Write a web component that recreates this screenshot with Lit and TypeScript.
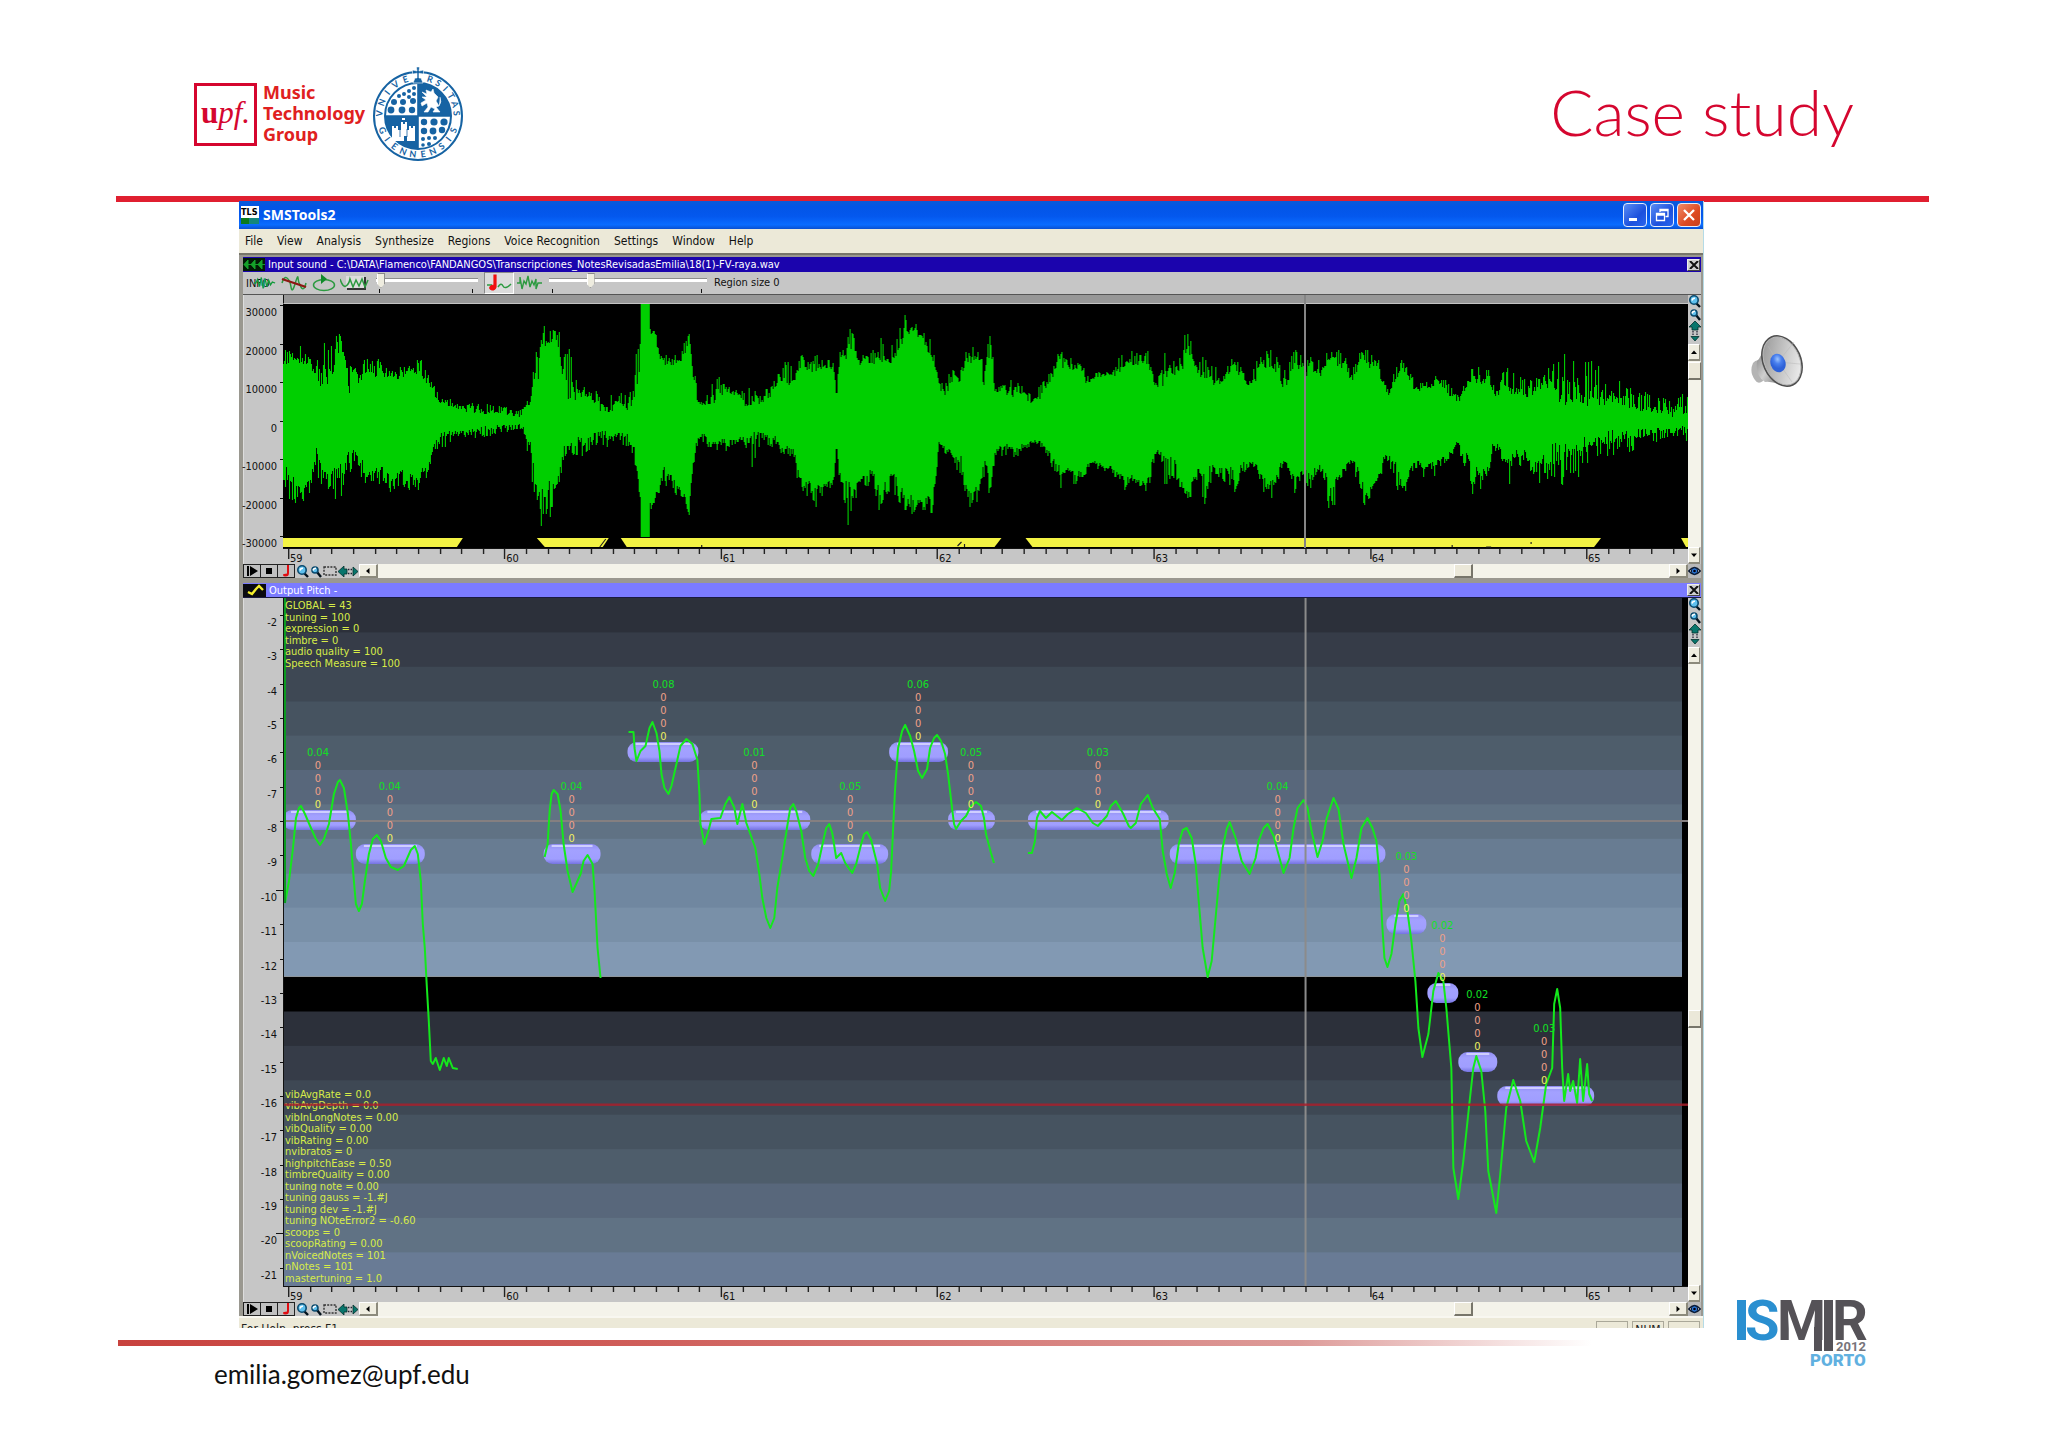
import { LitElement, html, svg, css } from "lit";
import { customElement, property } from "lit/decorators.js";

/* ---------- time axis shared by both panes ---------- */
const X0 = 283;
const W = 1406;
const SECOND = 216.5;
const pct = (x: number) => `${((x - X0) / W) * 100}%`;
const SECONDS = [59, 60, 61, 62, 63, 64, 65].map((s, i) => ({ s, x: 289 + i * SECOND }));

/* ---------- waveform envelope: x, upper body, upper peak, lower body, lower peak ---------- */
const STRIP_A = `112 215 185 550 600 130 205 185 565 630 150 205 170 610 640 165 215 200 580 610 182 260 220 500 560
200 260 150 560 590 215 230 165 560 600 232 190 135 570 675 240 185 160 540 580 252 280 220 505 560 262 235 225 490 520
272 270 240 500 530 285 235 200 540 600 300 250 220 550 570 315 245 210 535 575 330 250 225 560 590 345 245 205 575 610
358 260 235 545 580 372 245 230 570 610 385 240 230 560 585 400 245 208 580 600 410 260 215 530 565 418 270 250 540 565
430 310 285 470 490 445 335 320 445 480 465 345 325 435 460 480 345 325 428 440 500 358 340 425 440 520 362 345 420 440
540 365 345 418 438 560 365 350 412 430 580 368 352 410 425 600 375 362 405 420 615 372 355 410 425 625 350 340 430 470
635 345 315 460 510 642 270 250 540 590 648 230 165 600 660 655 250 200 630 690 662 150 92 640 740 670 155 125 660 720
678 150 118 590 690 688 150 125 600 620 698 165 128 560 640 706 280 150 480 520 712 290 180 470 500 720 310 190 465 480
735 305 270 460 500 750 310 285 460 490 765 320 290 445 470 780 345 310 430 460 800 355 330 440 480 820 345 300 430 455
840 350 320 440 465 855 335 300 470 500 862 280 180 560 600 869 200 150 620 660 870 42 42 742 742 888 42 42 742 742
890 120 100 640 660 900 130 110 620 635 908 190 170 600 620 920 215 190 545 590 930 220 180 555 575 945 210 190 580 610
955 210 190 600 620 965 175 150 630 650 973 140 130 660 685 980 240 200 520 540 990 330 310 450 470 1005 345 340 435 455
1015 330 290 450 470 1030 310 260 465 480 1045 300 280 460 490 1060 305 285 460 490 1075 310 290 450 475
1090 335 305 450 470 1105 330 290 450 530 1125 325 295 435 455 1145 310 285 440 465 1155 290 270 450 485
1165 260 240 470 490 1180 270 210 475 495 1195 270 235 490 520 1205 230 205 560 600 1215 220 190 600 630
1228 240 220 575 605 1240 230 200 610 655 1255 235 205 590 620 1270 225 210 580 600 1280 240 220 560 570
1285 330 320 460 450 1292 200 180 550 580 1300 195 180 590 640 1310 190 115 600 695 1320 150 120 620 680
1330 215 190 580 600 1345 220 200 560 590 1360 210 190 540 570 1373 200 130 620 695 1385 200 170 590 630
1400 215 180 560 590 1415 190 140 580 630 1430 110 75 630 665 1440 120 90 640 680 1450 110 90 620 660
1460 140 110 630 640 1475 160 130 630 670 1485 185 150 640 685 1495 230 210 580 600 1502 290 280 460 470
1515 310 285 470 490 1525 280 240 490 510 1535 270 230 500 520 1548 270 250 510 560 1558 215 190 600 640
1568 210 180 610 650`;
const STRIP_B = `22 200 160 620 650 32 205 180 600 630 42 190 135 590 640 52 300 230 510 540 58 200 150 560 600
64 160 120 600 625 72 300 280 480 500 85 305 290 480 510 100 300 265 470 490 115 310 280 480 500 135 315 290 465 480
150 340 320 455 460 165 315 285 455 470 180 280 260 480 500 195 250 230 520 540 206 190 160 550 605 215 235 210 540 560
232 225 195 550 580 245 235 220 550 575 262 275 250 530 550 280 260 245 515 530 300 255 250 540 555 315 252 240 530 550
325 235 190 550 570 340 225 205 575 600 355 215 185 560 575 370 215 195 575 590 385 215 185 590 610 395 230 190 530 560
402 285 280 490 500 412 300 260 480 490 422 240 175 530 600 432 230 180 520 560 445 250 230 520 560 455 220 190 570 590
463 200 108 600 610 475 180 150 600 630 482 210 180 570 590 492 245 230 540 560 505 250 190 575 640 512 240 210 570 650
522 270 240 530 560 535 280 220 540 560 550 245 225 540 580 568 230 190 560 600 580 265 235 530 560 597 285 275 520 530
610 260 225 520 530 622 220 190 560 590 635 215 180 590 630 650 220 185 580 610 663 280 240 520 540 675 270 240 520 530
688 220 190 570 600 700 230 170 570 610 712 260 230 545 570 725 215 190 570 600 737 250 210 530 555 752 240 215 545 570
765 190 155 620 680 778 215 180 580 620 790 220 190 550 580 808 265 245 510 520 820 240 200 540 580 830 190 175 590 640
840 220 180 600 650 852 215 190 590 620 862 230 190 570 590 872 270 250 510 540 885 310 290 500 510 900 260 240 540 590
912 235 205 590 625 922 240 230 580 600 932 280 260 530 550 945 300 280 515 530 960 290 280 540 570 972 290 270 520 540
985 270 255 530 570 1000 290 270 505 520 1015 315 290 485 500 1030 330 315 455 480 1045 285 265 500 540
1060 270 235 530 605 1075 265 230 550 590 1088 270 225 535 570 1100 300 280 470 490 1110 320 300 460 490
1120 290 255 500 520 1133 290 240 530 580 1150 300 260 490 530 1165 300 250 490 540 1180 305 270 520 540
1192 290 265 530 575 1210 280 250 500 560 1228 290 220 490 575 1243 300 185 500 575 1258 300 210 480 555
1270 290 195 500 560 1283 300 220 480 550 1297 310 230 460 510 1310 300 210 460 490 1325 320 260 450 500
1340 320 270 440 490 1360 320 280 445 485 1385 340 300 440 480 1410 350 310 430 465 1440 355 325 425 450
1470 365 330 425 440 1490 350 305 420 445 1505 350 310 420 450`;

type Row = number[];
const readStrip = (text: string, origin: number, scale: number): Row[] => {
  const n = text.split(/\s+/).map(Number);
  const rows: Row[] = [];
  for (let i = 0; i < n.length; i += 5) {
    rows.push([origin + n[i] / scale, ...n.slice(i + 1, i + 5).map((v) => 290 + v / 3)]);
  }
  return rows;
};
const ENVELOPE = [...readStrip(STRIP_A, 230, 2.119), ...readStrip(STRIP_B, 960, 2.063)];

const wavePath = (() => {
  let seed = 7;
  const rnd = () => {
    seed = (seed * 1103515245 + 12345) % 2147483648;
    return seed / 2147483648;
  };
  const jag = () => (rnd() < 0.3 ? 0.6 + rnd() * 0.6 : (rnd() - 0.55) * 0.9);
  let d = "";
  let k = 0;
  for (let x = X0; x < X0 + W; x++) {
    while (k < ENVELOPE.length - 2 && ENVELOPE[k + 1][0] < x) k++;
    const a = ENVELOPE[k];
    const b = ENVELOPE[k + 1];
    const t = Math.min(1, Math.max(0, (x - a[0]) / (b[0] - a[0])));
    const v = [1, 2, 3, 4].map((i) => a[i] + (b[i] - a[i]) * t);
    const top = Math.round(v[0] + (v[1] - v[0]) * jag());
    const bottom = Math.round(v[2] + (v[3] - v[2]) * jag());
    d += `M${x + 0.5} ${top}V${bottom}`;
  }
  return d;
})();

const VOICED = [
  "283,538 463,538 457,547 283,547",
  "537,538 609,538 603,547 545,547",
  "621,538 1002,538 995,547 627,547",
  "1026,538 1602,538 1595,547 1033,547",
  "1682,538 1689,538 1689,547 1687,547",
];

/* ---------- pitch pane ---------- */
const BANDS = ["#2c303a", "#363c48", "#3e4854", "#465360", "#4e5d6b", "#58677b", "#607284", "#687c92", "#7087a0", "#7990a8", "#8299b3"];
const BANDS_LOW = ["#2c303a", "#363c48", "#3e4854", "#465360", "#4e5d6b", "#58677b", "#607284", "#697b95"];
const STEP = 34.35;

const CURVES = [
  "284,902 288,880 292,847 295,817 298,807 300,805 304,813 310,827 315,838 319,844 323,838 328,823 333,793 337,781 339,779 343,787 347,813 350,843 353,880 355,903 358,910 361,903 364,880 368,853 372,838 376,834 380,840 385,857 390,866 397,869 403,865 410,849 414,845 417,853 420,880 422,923 424,947 426,985 428,1020 430,1060 432,1063 435,1057 439,1069 443,1057 446,1065 448,1057 452,1067 457,1068",
  "544,856 547,843 549,810 551,793 553,789 557,793 560,810 563,843 567,870 572,891 576,882 580,873 583,860 587,854 592,863 594,890 597,947 600,977",
  "628,731 633,731 634,747 636,760 640,750 645,745 649,727 652,721 656,732 659,750 661,773 664,787 668,793 671,785 676,763 680,745 686,738 692,743 697,759 699,793 700,823 704,843 708,830 711,818 720,817 725,803 729,796 734,807 737,823 742,803 746,822 750,833 755,847 759,873 762,897 766,917 770,927 774,917 777,887 782,857 787,825 790,807 793,803 796,810 801,830 805,857 809,870 813,875 818,863 823,840 826,827 829,823 832,832 836,857 841,852 845,862 852,872 856,863 861,843 864,833 867,831 871,839 877,863 880,887 885,900 889,890 891,870 893,827 895,787 898,747 902,730 905,724 910,735 914,750 918,770 922,777 927,768 930,747 934,737 937,734 941,740 945,753 948,773 952,807 954,823 956,828 961,820 966,815 971,805 976,801 981,805 984,817 986,833 991,852 994,862",
  "1028,852 1032,852 1035,840 1037,817 1040,810 1046,817 1052,811 1062,819 1068,813 1077,807 1086,812 1093,822 1098,825 1107,815 1111,805 1116,800 1123,812 1129,825 1131,827 1136,822 1141,803 1148,794 1153,807 1160,818 1163,850 1167,873 1171,887 1175,872 1179,843 1183,829 1187,827 1192,837 1196,863 1199,900 1203,947 1208,976 1212,960 1215,927 1219,883 1223,847 1227,828 1230,821 1236,837 1242,860 1250,873 1256,857 1259,840 1264,827 1268,823 1274,835 1278,850 1284,872 1290,857 1294,827 1298,807 1304,799 1308,807 1312,830 1318,856 1323,840 1327,818 1334,797 1339,808 1344,843 1352,877 1357,857 1362,827 1368,817 1373,827 1377,840 1380,873 1383,927 1385,957 1388,966 1392,953 1396,923 1400,900 1404,893 1408,910 1412,940 1416,980 1419,1027 1423,1056 1429,1033 1434,990 1439,972 1444,980 1447,1007 1452,1067 1454,1167 1459,1198 1464,1160 1470,1103 1474,1067 1477,1055 1482,1070 1486,1110 1489,1170 1497,1212 1501,1173 1507,1107 1514,1079 1521,1100 1527,1140 1535,1161 1541,1127 1547,1083 1553,1067 1555,1003 1558,988 1561,1007 1563,1067 1565,1100 1569,1073 1571,1090 1574,1080 1578,1102 1581,1058 1584,1100 1588,1063 1590,1093 1593,1100",
];

/* start, end, top, label centre, deviation */
const NOTES: [number, number, number, number, string][] = [
  [282, 355, 809, 317, "0.04"],
  [355, 424, 843, 389, "0.04"],
  [543, 600, 843, 571, "0.04"],
  [627, 698, 741, 663, "0.08"],
  [699, 810, 809, 754, "0.01"],
  [811, 888, 843, 850, "0.05"],
  [889, 948, 741, 918, "0.06"],
  [948, 995, 809, 971, "0.05"],
  [1028, 1169, 809, 1098, "0.03"],
  [1170, 1386, 843, 1278, "0.04"],
  [1387, 1427, 913, 1407, "0.03"],
  [1428, 1459, 982, 1443, "0.02"],
  [1459, 1498, 1051, 1478, "0.02"],
  [1498, 1595, 1085, 1545, "0.03"],
];

const GLOBALS = ["GLOBAL = 43", "tuning = 100", "expression = 0", "timbre = 0", "audio quality = 100", "Speech Measure = 100"];
const STATS = [
  "vibAvgRate = 0.0", "vibAvgDepth = 0.0", "vibInLongNotes = 0.00", "vibQuality = 0.00", "vibRating = 0.00",
  "nvibratos = 0", "highpitchEase = 0.50", "timbreQuality = 0.00", "tuning note = 0.00", "tuning gauss = -1.#J",
  "tuning dev = -1.#J", "tuning NOteError2 = -0.60", "scoops = 0", "scoopRating = 0.00", "nVoicedNotes = 101",
  "nNotes = 101", "mastertuning = 1.0",
];

const MENU = ["File", "View", "Analysis", "Synthesize", "Regions", "Voice Recognition", "Settings", "Window", "Help"];

/* ---------- small icons ---------- */
const lens = (big: boolean) => svg`
  <svg viewBox="0 0 12 13" width="12" height="13" aria-hidden="true">
    <line x1="7" y1=${big ? 8 : 7} x2="11" y2="12" stroke="#04121c" stroke-width="2.4"/>
    <circle cx="5" cy="5" r=${big ? 4.2 : 3} fill="#5fc0ee" stroke="#0b4a6e" stroke-width="1.6"/>
    <path d="M3 5.5 Q3.5 3 6 3.2" stroke="#fff" stroke-width="1.4" fill="none"/>
  </svg>`;
const eye = svg`
  <svg viewBox="0 0 13 12" width="13" height="12" aria-hidden="true">
    <path d="M.8 6 Q6.5 -.8 12.2 6 Q6.5 12.8 .8 6Z" fill="#fff" stroke="#0a1830" stroke-width="1.5"/>
    <circle cx="6.5" cy="6" r="3.2" fill="#2c78d8" stroke="#0a1830"/><circle cx="6.5" cy="6" r="1.3" fill="#001"/>
  </svg>`;
const tri = (p: string) => svg`<svg viewBox="0 0 8 8" width="8" height="8" aria-hidden="true"><path d=${p} fill="#000"/></svg>`;
const UP = "M1 6L4 2.5L7 6Z";
const DOWN = "M1 2.5L4 6L7 2.5Z";
const LEFT = "M5.5 1L2 4L5.5 7Z";
const RIGHT = "M2.5 1L6 4L2.5 7Z";

const shared = css`
  :host { display: block; }
  * { box-sizing: border-box; }
  button { font: inherit; color: inherit; margin: 0; padding: 0; border: 0; background: none; display: flex; align-items: center; justify-content: center; }
  svg { display: block; flex: none; }
`;

@customElement("time-axis")
class TimeAxis extends LitElement {
  static styles = [shared, css`
    :host { position: relative; height: 16px; background: #c6c6c6; border-top: 1px solid #111; }
    .ticks { width: 100%; height: 15px; }
    .sec { position: absolute; top: 3px; padding-left: 1px; font-size: 11px; line-height: 14px; color: #111; }
  `];
  render() {
    const minor: number[] = [];
    for (let x = 289; x < X0 + W; x += SECOND / 10) minor.push(x);
    return html`
      <svg class="ticks" viewBox="${X0} 0 ${W} 15" preserveAspectRatio="none" aria-hidden="true">
        ${minor.map((x, i) => svg`<rect x=${Math.round(x) - 1} y="0" width="1.4" height=${i % 10 === 0 ? 10 : 5} fill="#222"/>`)}
      </svg>
      ${SECONDS.map((t) => html`<span class="sec" style="left:${pct(t.x)}">${t.s}</span>`)}
    `;
  }
}

@customElement("transport-bar")
class TransportBar extends LitElement {
  @property() label = "";
  static styles = [shared, css`
    :host { display: flex; height: 14px; background: #c6c6c6; }
    .key { width: 17px; height: 14px; border: 1px solid #222; border-right-width: 0; background: #c0c0c0; }
    .key.last { border-right-width: 1px; width: 18px; }
    .tools { display: flex; align-items: center; gap: 1px; padding: 0 1px 0 2px; }
    .arrow { width: 19px; height: 14px; background: #efede0; border: 1px solid #fff; border-right: 2px solid #8c8a7c; border-bottom: 2px solid #8c8a7c; }
    .bar { flex: 1; min-width: 0; height: 14px; margin: 0; appearance: none; background: #f4f3ea; }
    .bar::-webkit-slider-thumb { appearance: none; width: 19px; height: 14px; background: #ebe8d9; border: 1px solid #fff; border-right: 2px solid #77756a; border-bottom: 2px solid #77756a; }
  `];
  render() {
    return html`
      <button class="key" aria-label="Play"><svg viewBox="0 0 14 12" width="14" height="12"><path d="M2 1V11H4V1Z M5 1L13 6L5 11Z"/></svg></button>
      <button class="key" aria-label="Stop"><svg viewBox="0 0 8 8" width="8" height="8"><rect x="1" y="1" width="6" height="6"/></svg></button>
      <button class="key last" aria-label="Note"><svg viewBox="0 0 12 12" width="12" height="12"><path d="M7 0H9V8Q9 11.5 5.5 11.5Q3 11.5 3 10Q3 8.5 7 8.5Z" fill="#e00d12"/></svg></button>
      <span class="tools">
        <button aria-label="Zoom in">${lens(true)}</button>
        <button aria-label="Zoom out">${lens(false)}</button>
        <button aria-label="Selection"><svg viewBox="0 0 14 10" width="14" height="10"><rect x="1" y="1" width="12" height="8" fill="none" stroke="#333" stroke-width="1.4" stroke-dasharray="2 1.2"/></svg></button>
        <button aria-label="Fit width"><svg viewBox="0 0 20 11" width="20" height="11"><path d="M0 5.5L6 0V3H9V8H6V11Z M20 5.5L15 1V10Z" fill="#08756c" stroke="#04302c" stroke-width=".8"/><path d="M10 3.5H15 M10 7.5H15" stroke="#223" stroke-dasharray="1.4 1.2" stroke-width="1.4"/></svg></button>
      </span>
      <button class="arrow" aria-label="Scroll left">${tri(LEFT)}</button>
      <input class="bar" type="range" min="0" max="1000" value="846" aria-label=${this.label} />
      <button class="arrow" aria-label="Scroll right">${tri(RIGHT)}</button>
    `;
  }
}

@customElement("side-rail")
class SideRail extends LitElement {
  @property({ type: Number }) pos = 0;
  @property() label = "";
  static styles = [shared, css`
    :host { display: flex; flex-direction: column; width: 13px; background: #c6c6c6; }
    .arrow { width: 12px; height: 17px; flex: none; background: #efede0; border: 1px solid #fff; border-right-color: #8c8a7c; border-bottom: 2px solid #8c8a7c; }
    .bar { writing-mode: vertical-lr; flex: 1; min-height: 0; width: 13px; margin: 0; appearance: none; background: #f4f3ea; }
    .bar::-webkit-slider-thumb { appearance: none; width: 13px; height: 18px; background: #ebe8d9; border: 1px solid #fff; border-right-color: #77756a; border-bottom: 2px solid #77756a; }
    .icons { display: flex; flex-direction: column; height: 49px; flex: none; }
  `];
  render() {
    return html`
      <span class="icons">
        <button aria-label="Zoom in">${lens(true)}</button>
        <button aria-label="Zoom out">${lens(false)}</button>
        <button aria-label="Fit height"><svg viewBox="0 0 12 20" width="12" height="20"><path d="M6 0L12 6H9V9H3V6H0Z M2 15.5H10L6 20Z" fill="#08756c" stroke="#04302c" stroke-width=".8"/><path d="M4 10V15 M8 10V15" stroke="#334" stroke-dasharray="1.4 1.2" stroke-width="1.4"/></svg></button>
      </span>
      <button class="arrow" aria-label="Scroll up">${tri(UP)}</button>
      <input class="bar" type="range" min="0" max="1000" .value=${String(this.pos)} aria-label=${this.label} />
      <button class="arrow" aria-label="Scroll down">${tri(DOWN)}</button>
    `;
  }
}

const paneStyles = css`
  .caption { display: flex; align-items: center; height: 15px; padding-right: 1px; font-size: 11px; font-weight: 400; line-height: 15px; color: #fff; margin: 0; }
  .caption h2 { flex: 1; margin: 0; font: inherit; padding-left: 3px; white-space: nowrap; }
  .shut { width: 13px; height: 12px; background: #cfcfcf; border: 1px solid #eee; border-right-color: #444; border-bottom-color: #444; }
  .body { display: grid; grid-template-columns: 40px minmax(0, 1fr) 13px; }
  .scale { position: relative; grid-row: 1 / 3; background: #c6c6c6; border-left: 1px solid #ddd; }
  .mark { position: absolute; right: 0; width: 3px; height: 1px; background: #111; }
  .mark.long { width: 7px; }
  .num { position: absolute; right: 6px; margin-top: 1px; font-size: 11px; line-height: 13px; color: #111; }
  .plot { width: 100%; }
  transport-bar { grid-column: 1 / 3; }
  side-rail { grid-column: 3; grid-row: 1 / 3; }
  time-axis { grid-column: 2; }
  .eye { background: #b9b9b9; }
`;

@customElement("wave-pane")
class WavePane extends LitElement {
  static styles = [shared, paneStyles, css`
    .caption { background: #1b04ad; }
    .tools { display: flex; align-items: center; height: 23px; background: #c6c6c6; border-bottom: 1px solid #555; padding-left: 3px; font-size: 11px; color: #111; }
    .info { position: relative; width: 33px; height: 20px; justify-content: flex-start; }
    .info svg { position: absolute; left: 8px; top: 3px; }
    .push { width: 30px; height: 22px; }
    .on { background: #dcdcdc; border: 1px solid #8a8a8a; border-right-color: #fff; border-bottom-color: #fff; margin-left: 4px; }
    .fader { display: flex; flex-direction: column; height: 22px; }
    .one { width: 102px; margin: 0 2px 0 7px; }
    .two { width: 158px; margin: 0 7px 0 5px; }
    .fader input { appearance: none; width: 100%; height: 17px; margin: 0; background: linear-gradient(#8d8d8d, #8d8d8d) 0 6px / 100% 1px no-repeat, linear-gradient(#fff, #fff) 0 7px / 100% 3px no-repeat; }
    .fader input::-webkit-slider-thumb { appearance: none; width: 8px; height: 15px; background: #eeecdf; border: 1px solid #888; border-left-color: #fff; clip-path: polygon(0 0, 100% 0, 100% 70%, 50% 100%, 0 70%); }
    .ends { display: flex; justify-content: space-between; padding: 0 5px 0 3px; }
    .ends i { width: 1px; height: 4px; background: #111; }
    .band { position: relative; height: 9px; background: #979797; border-left: 1px solid #111; border-bottom: 1px solid #c4c4c4; }
    .screen { background: #000; position: relative; }
    .plot { height: 244px; }
    .cursor { position: absolute; top: 0; bottom: 0; width: 2px; background: #858585; }
    .region { padding-bottom: 2px; }
  `];
  render() {
    return html`
      <div class="caption">
        <svg viewBox="0 0 22 13" width="22" height="13" aria-hidden="true"><rect width="22" height="13" fill="#021a05"/><path d="M1 6.5L5 2V11Z M8 6.5L12 2V11Z M15 6.5L19 2V11Z M1 6.5H22" fill="#15a22a" stroke="#15a22a"/></svg>
        <h2>Input sound - C:\\DATA\\Flamenco\\FANDANGOS\\Transcripciones_NotesRevisadasEmilia\\18(1)-FV-raya.wav</h2>
        <button class="shut" aria-label="Close input sound"><svg viewBox="0 0 10 8" width="10" height="8"><path d="M1 0L9 8M9 0L1 8" stroke="#111" stroke-width="2"/></svg></button>
      </div>
      <div class="tools" role="toolbar" aria-label="Sound tools">
        <button class="info">INFO<svg viewBox="0 0 24 14" width="22" height="14"><path d="M0 7H2L4 3L6 11L8 1L10 13L12 2L14 11L16 4L18 9L20 6L23 7" fill="none" stroke="#119a3a" stroke-width="1.4"/><path d="M8 3V10M11 2V12" stroke="#16a0a0"/></svg></button>
        <button class="push" aria-label="Mute wave"><svg viewBox="0 0 26 16" width="26" height="16"><path d="M1 8Q3 1 6 3T10 12T14 9T17 3T20 12T25 8" fill="none" stroke="#2c9a40" stroke-width="1.5"/><path d="M1 4L25 12" stroke="#8e1712" stroke-width="2.2"/></svg></button>
        <button class="push" aria-label="Loop"><svg viewBox="0 0 24 20" width="24" height="20"><ellipse cx="12" cy="12" rx="10.5" ry="5.5" fill="none" stroke="#2c9a40" stroke-width="1.5"/><path d="M9 1L15 6L9 11Z" fill="#118a2a"/></svg></button>
        <button class="push" aria-label="Wave window"><svg viewBox="0 0 29 18" width="29" height="18"><path d="M7 14H24V3H26V16H7Z" fill="#333"/><rect x="6" y="2" width="18" height="12" fill="#ddd"/><path d="M0 5Q3 14 6 12T10 5L13 13L16 6L19 12L22 5L25 13L28 6" fill="none" stroke="#2c9a40" stroke-width="1.5"/></svg></button>
        <span class="fader one"><input type="range" min="0" max="100" value="1" aria-label="Volume" /><span class="ends"><i></i><i></i></span></span>
        <button class="push on" aria-label="Notes"><svg viewBox="0 0 26 18" width="26" height="18"><path d="M12 13Q15 8 17 12T25 10" fill="none" stroke="#2c9a40" stroke-width="1.5"/><path d="M1 11H6" stroke="#2c9a40" stroke-width="1.5"/><path d="M8 1H10V13Q9 16 6 16Q3 15 4 13Q5 11 8 11Z" fill="#f01010" stroke="#f01010" stroke-width="1.2"/></svg></button>
        <button class="push" aria-label="Spectrum"><svg viewBox="0 0 25 16" width="25" height="16"><path d="M0 8H3V2L5 14L7 6L9 9L11 1L13 12L15 6L17 10L19 4V14L21 8H25" fill="none" stroke="#2c9a40" stroke-width="1.4"/></svg></button>
        <span class="fader two"><input type="range" min="0" max="100" value="25" aria-label="Region size" /><span class="ends"><i></i><i></i></span></span>
        <span class="region">Region size 0</span>
      </div>
      <div class="body">
        <div class="scale">
          ${[30000, 20000, 10000, 0, -10000, -20000, -30000].map(
            (v, i) => html`<span class="mark" style="top:${10 + Math.round(i * 38.5)}px"></span><span class="num" style="top:${10 + Math.round(i * 38.5)}px">${v}</span>`
          )}
        </div>
        <div class="screen">
          <div class="band"></div>
          <svg class="plot" viewBox="${X0} 304 ${W} 244" preserveAspectRatio="none" role="img" aria-label="Waveform">
            <path d=${wavePath} stroke="#00cf00" stroke-width="1.1"/>
            ${VOICED.map((p) => svg`<polygon points=${p} fill="#f3f344"/>`)}
            <path d="M600 547L606 539 M702 545V547 M958 546L962 542 M965 544V547 M1453 547V545 M1487 547H1492 M1532 542V544" stroke="#222" stroke-width="1.2"/>
          </svg>
          <span class="cursor" style="left:${pct(1305)}"></span>
        </div>
        <side-rail .pos=${8} label="Vertical position of the waveform"></side-rail>
        <time-axis></time-axis>
        <transport-bar label="Time position of the waveform"></transport-bar>
        <button class="eye" aria-label="View options">${eye}</button>
      </div>
    `;
  }
}

@customElement("pitch-pane")
class PitchPane extends LitElement {
  static styles = [shared, paneStyles, css`
    .caption { background: #7b7bff; border-bottom: 1px solid #1a1a40; }
    .screen { position: relative; background: #000; border-left: 1px solid #111; overflow: hidden; }
    .plot { height: 688px; }
    .over { position: absolute; inset: 0; pointer-events: none; }
    .list { position: absolute; left: 1px; margin: 0; padding: 0; list-style: none; display: grid; grid-auto-rows: 1fr; font-size: 11px; line-height: 11px; color: #d7ec48; white-space: nowrap; }
    .top { top: 2px; height: 69px; }
    .low { top: 491px; height: 195px; }
    .tag { position: absolute; display: flex; flex-direction: column; align-items: center; transform: translate(-50%, -100%); font-size: 11px; line-height: 13px; color: #f0a088; }
    .tag b { font-weight: 400; color: #12e024; }
    .tag em { font-style: normal; color: #f0f060; }
  `];
  render() {
    return html`
      <div class="caption">
        <svg viewBox="0 0 23 13" width="23" height="13" aria-hidden="true"><rect width="23" height="13" fill="#0a0a10"/><path d="M5 8L9 10L13 5L16 2L20 6" fill="none" stroke="#f4ee2c" stroke-width="2.4"/></svg>
        <h2>Output Pitch -</h2>
        <button class="shut" aria-label="Close output pitch"><svg viewBox="0 0 10 8" width="10" height="8"><path d="M1 0L9 8M9 0L1 8" stroke="#111" stroke-width="2"/></svg></button>
      </div>
      <div class="body">
        <div class="scale">
          ${Array.from({ length: 20 }, (_, i) => {
            const top = 17 + Math.round(i * STEP);
            return html`<span class="mark ${(i + 2) % 10 ? "" : "long"}" style="top:${top}px"></span><span class="num" style="top:${top}px">${-(i + 2)}</span>`;
          })}
        </div>
        <div class="screen">
          <svg class="plot" viewBox="${X0} 597 ${W} 688" preserveAspectRatio="none" role="img" aria-label="Pitch curve and notes">
            <defs>
              <linearGradient id="note" x1="0" y1="0" x2="0" y2="1">
                <stop offset="0" stop-color="#8f8df0"/><stop offset=".3" stop-color="#a3a1ff"/>
                <stop offset=".75" stop-color="#a09eff"/><stop offset="1" stop-color="#7573e0"/>
              </linearGradient>
            </defs>
            ${BANDS.map((c, i) => svg`<rect x=${X0} y=${597 + i * 34.4} width="1400" height="35" fill=${c}/>`)}
            <rect x=${X0} y="976" width=${W} height="35" fill="#000"/>
            <rect x=${X0} y="975" width="1400" height="1" fill="#8f969c"/>
            ${BANDS_LOW.map((c, i) => svg`<rect x=${X0} y=${1010.5 + i * 34.4} width="1400" height="36" fill=${c}/>`)}
            ${NOTES.map(([a, b, y]) => svg`
              <rect x=${a} y=${y} width=${b - a} height="20" rx="9" fill="url(#note)"/>
              <rect x=${a + 8} y=${y + 1} width=${b - a - 16} height="2" fill="#cfceff"/>`)}
            <rect x=${X0} y="819" width=${W} height="2" fill="#857f80"/>
            ${CURVES.map((p) => svg`<polyline points=${p} fill="none" stroke="#14e81c" stroke-width="2" stroke-linejoin="round"/>`)}
            <rect x=${X0} y="597" width="2" height="305" fill="#0b9a20"/>
            <rect x="1305" y="597" width="2" height="688" fill="#8b8b8b"/>
          </svg>
          <ul class="list top">${GLOBALS.map((t) => html`<li>${t}</li>`)}</ul>
          <ul class="list low">${STATS.map((t) => html`<li>${t}</li>`)}</ul>
          ${NOTES.map(([, , y, x, v]) => html`<span class="tag" style="left:${pct(x)};top:${y - 596}px"><b>${v}</b><span>0</span><span>0</span><span>0</span><em>0</em></span>`)}
          <svg class="plot over" viewBox="0 0 1 688" preserveAspectRatio="none" aria-hidden="true"><rect y="505.5" width="1" height="2.4" fill="#a8202c" fill-opacity=".85"/></svg>
        </div>
        <side-rail .pos=${574} label="Vertical position of the pitch plot"></side-rail>
        <time-axis></time-axis>
        <transport-bar label="Time position of the pitch plot"></transport-bar>
        <button class="eye" aria-label="View options">${eye}</button>
      </div>
    `;
  }
}

@customElement("sms-window")
class SmsWindow extends LitElement {
  static styles = [shared, css`
    :host { font-family: "DejaVu Sans Condensed", "Noto Sans", sans-serif; background: #ece9d8; border-right: 1px solid #b5dbe6; }
    .title { display: flex; align-items: center; gap: 3px; height: 28px; padding: 0 2px; background: linear-gradient(#0b5ad8, #0355e6 20%, #0458ee 55%, #0a6cff 85%, #0a50d0); }
    h1 { flex: 1; margin: 0; font: 700 14px/28px "Noto Sans", sans-serif; height: 28px; color: #fff; padding-left: 1px; }
    .ctl { width: 24px; height: 24px; border: 1px solid #e6eefc; border-radius: 4px; background: linear-gradient(135deg, #5a8df5, #1c50dd 60%, #2a66ee); }
    .close { background: linear-gradient(135deg, #f08b68, #dd4a22 60%, #c8401c); }
    .menu { display: flex; align-items: center; gap: 14px; height: 24px; padding: 0 6px; font-size: 12px; color: #111; }
    .work { padding: 4px 2px 0 4px; background: linear-gradient(#77756a, #77756a) 0 0 / 100% 2px no-repeat, #9a9890; display: flex; flex-direction: column; gap: 5px; }
    .status { display: flex; justify-content: flex-end; gap: 4px; align-items: flex-start; height: 12px; overflow: hidden; padding: 5px 3px 0 2px; border-top: 2px solid #f8f7f0; font-size: 12px; line-height: 13px; color: #222; }
    .status span { flex: 1; }
    .status i { font-style: normal; width: 32px; height: 16px; margin-top: -2px; border: 1px solid #aaa899; text-align: center; line-height: 17px; }
  `];
  render() {
    return html`
      <header class="title">
        <svg viewBox="0 0 18 18" width="18" height="18" aria-hidden="true"><rect width="18" height="18" fill="#fff"/><rect y="12" width="18" height="6" fill="#0b7a1c"/><rect x="8" y="12" width="10" height="6" fill="#14867c"/><text x="0" y="9" font-family="DejaVu Sans Condensed, sans-serif" font-size="9" font-weight="700">TLS</text></svg>
        <h1>SMSTools2</h1>
        <button class="ctl" aria-label="Minimize"><svg viewBox="0 0 16 16" width="16" height="16"><rect x="2" y="11" width="8" height="3" fill="#fff"/></svg></button>
        <button class="ctl" aria-label="Restore"><svg viewBox="0 0 16 16" width="16" height="16" fill="none" stroke="#fff" stroke-width="1.3"><path d="M6 5V2.5H14V9.5H11.5M6 3.5H14"/><path d="M2.5 6.5H10.5V13.5H2.5ZM2.5 8H10.5"/></svg></button>
        <button class="ctl close" aria-label="Close"><svg viewBox="0 0 16 16" width="16" height="16"><path d="M3 3L13 13M13 3L3 13" stroke="#fff" stroke-width="2.3"/></svg></button>
      </header>
      <nav class="menu">${MENU.map((m) => html`<button>${m}</button>`)}</nav>
      <div class="work"><wave-pane></wave-pane><pitch-pane></pitch-pane></div>
      <footer class="status"><span>For Help, press F1</span><i></i><i>NUM</i><i></i></footer>
    `;
  }
}

/* Letters of a seal, each turned to stand on its ring */
const ring = (word: string, from: number, to: number, r: number, inward: boolean) =>
  [...word].map((ch, i) => {
    const a = from + ((to - from) * i) / (word.length - 1);
    const rad = (a * Math.PI) / 180;
    return svg`<text transform="translate(${45 + r * Math.sin(rad)} ${50 - r * Math.cos(rad)}) rotate(${inward ? a + 180 : a})" text-anchor="middle" font-family="Lato, sans-serif" font-size="9" font-weight="700" fill="#1663a3">${ch}</text>`;
  });

const seal = html`
  <svg viewBox="0 0 90 96" width="90" height="96" role="img" aria-label="Universitas Giennensis">
    <circle cx="45" cy="50" r="44" fill="#fff" stroke="#1663a3" stroke-width="2"/>
    <circle cx="45" cy="50" r="33" fill="#fff" stroke="#1663a3" stroke-width="2"/>
    <path d="M45 50V17A33 33 0 0 1 78 50Z M45 50V83A33 33 0 0 1 12 50Z" fill="#1663a3"/>
    <path d="M45 17V83M12 50H78" stroke="#1663a3" stroke-width="1.6"/>
    <g fill="#1663a3">
      ${[[41, 22, 2], [36, 25, 2], [31, 28, 2], [41, 28, 2], [36, 31, 2], [26, 30, 2], [40, 35, 3], [30, 36, 3], [21, 36, 3], [39, 44, 3.2], [29, 44, 3.4], [18, 44, 3.4],
        [51, 56, 3.2], [61, 56, 3.6], [71, 56, 3.6], [51, 65, 3.2], [60, 65, 3.4], [69, 64, 3.2], [50, 73, 2], [56, 72, 2], [62, 72, 2], [50, 79, 1.8], [56, 78, 2]].map(
        ([x, y, r]) => svg`<circle cx=${x} cy=${y} r=${r}/>`)}
    </g>
    <path d="M19 75V60H21V62H23V60H25V64H28V56H30V58H32V56H34V64H36V60H38V62H40V60H42V75H34V70H31V75Z M29 54V52H32V54Z" fill="#fff"/>
    <path d="M27 63V71M34 63V71" stroke="#1663a3" stroke-width=".8"/>
    <path d="M49 26L54 28L53 24L58 26L60 23L61 27L65 31L63 35L66 40L63 41L67 46H60L62 43L58 41L55 46H51L55 41L54 37L49 40L48 37L53 34L49 31L54 31Z M67 31Q69 36 66 40" fill="#fff" stroke="#fff" stroke-width=".6"/>
    <path d="M43.4 1H46.6L46 5L50.5 4V8L46 7.2V12H48L50 17H40L42 12H44V7.2L39.5 8V4L44 5Z" fill="#1663a3" stroke="#fff" stroke-width=".6"/>
    ${ring("VNIVE", -86, -19, 35.5, false)}
    ${ring("RSITAS", 18, 86, 35.5, false)}
    ${ring("GIENNENSIS", -112, -248, 41.5, true)}
  </svg>`;

@customElement("app-root")
class AppRoot extends LitElement {
  static styles = [shared, css`
    .slide { display: grid; grid-template-columns: 239px minmax(0, 1fr) 344px; grid-template-rows: 196px auto 119px; min-height: 100vh; background: #fff; }
    .head { grid-column: 1 / -1; display: flex; align-items: flex-start; padding: 66px 194px 0; }
    .upf { width: 63px; height: 63px; margin-top: 17px; padding-bottom: 3px; border: 3px solid #d5062f; display: flex; align-items: center; justify-content: center; font: italic 31px/32px "Liberation Serif", serif; color: #d5062f; }
    .upf b { font-style: normal; }
    .group { margin: 16px 8px 0 6px; width: 102px; font: 700 18px/21px "Noto Sans", sans-serif; color: #e02020; white-space: nowrap; }
    .headline { margin: 6px 0 0 auto; font: 300 64px/80px Lato, sans-serif; color: #d5062f; }
    .line { grid-column: 1 / -1; grid-row: 2; align-self: start; height: 6px; margin: 0 119px 0 116px; background: #e01f30; }
    sms-window { grid-column: 2; grid-row: 2; margin-top: 5px; }
    .side { grid-column: 3; grid-row: 2 / 4; display: flex; flex-direction: column; justify-content: space-between; padding: 138px 0 80px 33px; }
    .sound { margin-left: 13px; align-self: flex-start; }
    .foot { grid-column: 1 / 3; grid-row: 3; padding: 12px 112px 0 118px; }
    .fade { height: 6px; background: linear-gradient(90deg, #c8423e, #cf5d59 35%, #dd9a98 80%, #dd9a9800); }
    .mail { display: inline-block; margin: 13px 0 0 96px; font: 400 26px/30px Lato, sans-serif; color: #111; text-decoration: none; }
  `];
  render() {
    return html`
      <main class="slide">
        <header class="head">
          <div class="upf"><b>u</b>pf.</div>
          <div class="group">Music<br />Technology<br />Group</div>
          ${seal}
          <h1 class="headline">Case study</h1>
        </header>
        <div class="line"></div>
        <sms-window></sms-window>
        <aside class="side">
          <button class="sound" aria-label="Play sound">
            <svg viewBox="0 0 54 54" width="54" height="54">
              <defs>
                <linearGradient id="horn" x1="0" y1="0" x2="1" y2="1"><stop offset="0" stop-color="#777"/><stop offset=".5" stop-color="#cfcfcf"/><stop offset="1" stop-color="#666"/></linearGradient>
                <linearGradient id="cone" x1="0" y1="0" x2="1" y2="1"><stop offset="0" stop-color="#8f8f8f"/><stop offset="1" stop-color="#fafafa"/></linearGradient>
                <radialGradient id="ball" cx=".55" cy=".3"><stop offset="0" stop-color="#9cc4ff"/><stop offset=".5" stop-color="#4a80ee"/><stop offset="1" stop-color="#2f62d8"/></radialGradient>
              </defs>
              <path d="M3 29Q6 25 11 27L13 47Q8 51 5 46Q-1 38 3 29Z" fill="#b4b4b4"/>
              <path d="M7 27Q11 24 15 10L34 52Q22 47 15 48Q5 42 7 27Z" fill="url(#horn)"/>
              <ellipse cx="32" cy="27" rx="19.5" ry="27" transform="rotate(-24 32 27)" fill="#4e4e4e"/>
              <ellipse cx="32" cy="27" rx="17.5" ry="25" transform="rotate(-24 32 27)" fill="url(#cone)" stroke="#bbb"/>
              <path d="M28 28L18 12M28 28L44 8M28 28L50 30M28 28L42 48M28 28L22 42" stroke="#b8b8b8" stroke-width=".5"/>
              <ellipse cx="28" cy="29" rx="7.5" ry="9.5" transform="rotate(-18 28 29)" fill="url(#ball)"/>
            </svg>
          </button>
          <svg viewBox="0 0 132 70" width="132" height="70" role="img" aria-label="ISMIR 2012 Porto">
            <g font-family="Roboto, Liberation Sans, sans-serif" font-weight="700" font-size="56">
              <text x="8" y="43" fill="#2a8fd0">S</text>
              <text x="40" y="43" fill="#555257">M</text>
              <text x="95" y="43" fill="#555257">R</text>
            </g>
            <rect x="0" y="3" width="9" height="40" fill="#2a8fd0"/>
            <rect x="77" y="30" width="8" height="24" fill="#555257"/>
            <rect x="87" y="3" width="9" height="51" fill="#555257"/>
            <text x="99" y="54" font-family="Roboto, sans-serif" font-weight="700" font-size="13" fill="#77747a">2012</text>
            <text x="73" y="69" font-family="Roboto, sans-serif" font-weight="900" font-size="17" fill="#60b0e0">PORTO</text>
          </svg>
        </aside>
        <footer class="foot">
          <div class="fade"></div>
          <a class="mail" href="mailto:emilia.gomez@upf.edu">emilia.gomez@upf.edu</a>
        </footer>
      </main>
    `;
  }
}
